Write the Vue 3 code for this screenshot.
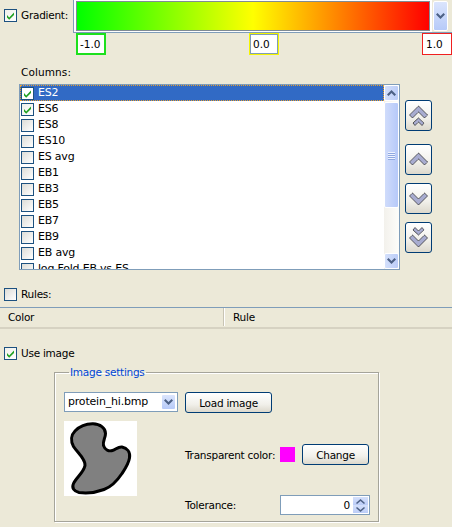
<script setup>
const columns = ['ES2','ES6','ES8','ES10','ES avg','EB1','EB3','EB5','EB7','EB9','EB avg','log Fold EB vs ES'].map((name,i)=>({name,checked:i<2}))
const chevrons = {
  top: ['M13.5 6L22.5 15L19.5 18L13.5 12L7.5 18L4.5 15Z','M13.5 18L19 23L17 25.5L13.5 22L10 25.5L8 23Z'],
  up: ['M13.5 9L22.5 18L19.5 21L13.5 15L7.5 21L4.5 18Z'],
  down: ['M13.5 22L22.5 13L19.5 10L13.5 16L7.5 10L4.5 13Z'],
  bottom: ['M13.5 25L22.5 16L19.5 13L13.5 19L7.5 13L4.5 16Z','M13.5 13L19 8L17 5.5L13.5 9L10 5.5L8 8Z'],
}
const moves = [
  {k:'top',cls:'mv-top'},{k:'up',cls:'mv-up'},{k:'down',cls:'mv-down'},{k:'bottom',cls:'mv-bottom'}
]
</script>

<template>
  <div class="page">
    <section class="grad-row">
      <span class="cb on cb-grad"><svg viewBox="0 0 11 11"><path d="M2 5l2.2 2.4L9 2.5v2.4L4.2 9.8 2 7.4z"/></svg></span>
      <span class="lbl grad-lbl">Gradient:</span>
      <div class="grad-combo">
        <div class="grad-bar"></div>
        <div class="combo-btn big"><svg viewBox="0 0 9 7" width="9" height="7"><path d="M0 1.5L1.5 0L4.5 3L7.5 0L9 1.5L4.5 6Z"/></svg></div>
      </div>
    </section>
    <section class="limits">
      <span class="lim green">-1.0</span>
      <span class="lim yellow">0.0</span>
      <span class="lim red">1.0</span>
    </section>

    <div class="lbl col-lbl">Columns:</div>

    <section class="col-row">
      <div class="list">
        <div class="rows">
          <div v-for="(c,i) in columns" :key="c.name" class="row" :class="{sel:i===0}">
            <span class="cb" :class="{on:c.checked}"><svg v-if="c.checked" viewBox="0 0 11 11"><path d="M2 5l2.2 2.4L9 2.5v2.4L4.2 9.8 2 7.4z"/></svg></span>
            <span class="row-text">{{ c.name }}</span>
          </div>
        </div>
        <div class="vscroll">
          <div class="sb-btn"><svg viewBox="0 0 9 7" width="9" height="7"><path d="M0 4.5L1.5 6L4.5 3L7.5 6L9 4.5L4.5 0Z"/></svg></div>
          <div class="thumb"><i></i><i></i><i></i><i></i></div>
          <div class="track"></div>
          <div class="sb-btn"><svg viewBox="0 0 9 7" width="9" height="7"><path d="M0 1.5L1.5 0L4.5 3L7.5 0L9 1.5L4.5 6Z"/></svg></div>
        </div>
      </div>
      <div class="moves">
        <button v-for="m in moves" :key="m.k" class="btn mv" :class="m.cls">
          <svg width="27" height="31" viewBox="0 0 27 31"><path v-for="d in chevrons[m.k]" :key="d" :d="d"/></svg>
        </button>
      </div>
    </section>

    <section class="check-row rules">
      <span class="cb"></span><span class="lbl">Rules:</span>
    </section>

    <section class="table-head">
      <div class="th th-color">Color</div>
      <div class="th th-rule">Rule</div>
    </section>

    <section class="check-row use">
      <span class="cb on"><svg viewBox="0 0 11 11"><path d="M2 5l2.2 2.4L9 2.5v2.4L4.2 9.8 2 7.4z"/></svg></span><span class="lbl">Use image</span>
    </section>

    <fieldset class="settings">
      <legend>Image settings</legend>
      <div class="set-grid">
        <div class="left">
          <div class="top-line">
            <div class="combo"><span>protein_hi.bmp</span><div class="combo-btn"><svg viewBox="0 0 9 7" width="9" height="7"><path d="M0 1.5L1.5 0L4.5 3L7.5 0L9 1.5L4.5 6Z"/></svg></div></div>
            <button class="btn load">Load image</button>
          </div>
          <div class="preview">
            <svg width="73" height="75" viewBox="0 0 73 75">
              <defs><filter id="soft" x="-10%" y="-10%" width="120%" height="120%"><feGaussianBlur stdDeviation="0.6"/></filter></defs>
              <path filter="url(#soft)" d="M29 2.8C36 3 41.5 7 41.5 12.5C41.5 17 38.5 20 39.5 24.5C41 29 45 30.5 48.5 29.5C52 28.5 54 25.5 58 26C63 27 66.5 31 65.5 37C64.5 43 61 48 58 52.5C53 60 47 66 40 68.5C32 71.5 22 72.5 15 71.5C10 70.5 7.5 67 9.5 62.5C12 57 20 51 21 44.5C22 38 13 31 9.5 25.5C6.5 20 7 14 11 10C16 5 23 2.7 29 2.8Z" fill="#808080" stroke="#000" stroke-width="3"/>
            </svg>
          </div>
        </div>
        <div class="right">
          <div class="field transparent">
            <span class="lbl">Transparent color:</span>
            <span class="swatch"></span>
            <button class="btn change">Change</button>
          </div>
          <div class="field tol">
            <span class="lbl">Tolerance:</span>
            <div class="spin"><span class="val">0</span>
              <div class="spin-btns">
                <div><svg viewBox="0 0 9 5" width="9" height="5"><path d="M0 4L1 5L4.5 2L8 5L9 4L4.5 0Z"/></svg></div>
                <div><svg viewBox="0 0 9 5" width="9" height="5"><path d="M0 1L1 0L4.5 3L8 0L9 1L4.5 5Z"/></svg></div>
              </div>
            </div>
          </div>
        </div>
      </div>
    </fieldset>
  </div>
</template>

<style>
html, body { margin: 0; background: #ece9d8; }
</style>

<style scoped>
.page {
  width: 452px; height: 527px; overflow: hidden; background: #ece9d8;
  font-family: "DejaVu Sans", sans-serif; font-size: 10.5px; letter-spacing: -0.25px; color: #000;
}
.lbl { line-height: 14px; white-space: nowrap; }
.cb {
  box-sizing: border-box; width: 13px; height: 13px; flex: none; display: block;
  border: 1px solid #1c5180; background: linear-gradient(135deg, #dcdcd7, #fff);
}
.cb.on { background: linear-gradient(135deg, #f0f0ea, #fff); }
.cb svg { display: block; width: 11px; height: 11px; fill: #21a121; }

.grad-row { display: flex; height: 33px; }
.cb-grad { margin: 9px 0 0 4px; }
.grad-lbl { margin: 8px 0 0 4px; width: 55px; }
.grad-combo {
  box-sizing: border-box; flex: 1; height: 33px; display: flex; gap: 3px;
  border: 1px solid #7f9db9; border-top: 0; border-right: 0; padding: 1px 2px 2px 2px;
  background: #fff;
}
.grad-bar {
  width: 352px; height: 28px; border: 1px solid #808b94; 
  background: linear-gradient(to right, #0f0, #ff0 50%, #f00);
}
.grad-combo { background: linear-gradient(#ece9d8, #ece9d8) right / 20px 100% no-repeat, #fff; }
.combo-btn {
  box-sizing: border-box; width: 15px; display: flex; align-items: center; justify-content: center;
  background: linear-gradient(#dbe5fd, #b7caf8); border: 1px solid #fff; border-radius: 2px;
}
.combo-btn.big { height: 30px; margin-right: 2px; }
.combo-btn svg, .sb-btn svg { fill: #4d6185; }

.limits { display: flex; justify-content: space-between; padding-left: 76px; }
.lim {
  box-sizing: border-box; width: 30px; height: 22px; background: #fff; border: 1px solid #7f9db9;
  line-height: 19px; padding-left: 3px; letter-spacing: 0;
}
.green { border: 2px solid #1de01d; line-height: 18px; padding-left: 2px; }
.yellow { border: 1px solid #f5f500; box-shadow: inset 0 0 0 1px #7f9db9; padding-left: 3px; line-height: 20px; }
.red { border: 1px solid #f02020; box-shadow: inset 0 0 0 1px #fff; padding-left: 3px; line-height: 20px; }

.col-lbl { margin: 10px 0 0 21px; letter-spacing: 0.1px; }

.col-row { display: flex; margin: 5px 0 0 19px; align-items: flex-start; }
.list {
  box-sizing: border-box; width: 381px; height: 186px; display: flex; overflow: hidden;
  border: 1px solid #7f9db9; background: #fff;
}
.rows { flex: 1; min-width: 0; overflow: hidden; }
.row { display: flex; align-items: center; height: 16px; padding-left: 1px; }
.row .cb { margin-right: 4px; }
.row-text { line-height: 16px; white-space: nowrap; font-size: 11px; letter-spacing: -0.2px; }
.row.sel { background: #316ac5; color: #fff; outline: 1px dotted #e8a030; outline-offset: -1px; }
.row.sel .cb { background: #fff; }

.vscroll { width: 15px; flex: none; display: flex; flex-direction: column; background: linear-gradient(to right, #f3f1ec, #fdfdfa); }
.sb-btn {
  box-sizing: border-box; height: 16px; flex: none; display: flex; align-items: center; justify-content: center;
  background: linear-gradient(to right, #d4e0fb, #bccdf8); border: 1px solid #fff; border-radius: 2px;
}
.thumb {
  box-sizing: border-box; height: 106px; margin-top: 1px; flex: none;
  background: linear-gradient(to right, #d0dcfb, #b6c9f9); border: 1px solid #fff; border-radius: 2px;
  display: flex; flex-direction: column; align-items: center; justify-content: center; gap: 1px;
}
.thumb i { display: block; width: 7px; height: 1px; background: #eef3fe; box-shadow: 0 1px 0 #8fa8e0; }
.track { flex: 1; }

.btn {
  box-sizing: border-box; border: 1px solid #003c74; border-radius: 3px; padding: 0; margin: 0;
  background: linear-gradient(#fff, #f1f0ea 60%, #dcd8cc);
  font: inherit; letter-spacing: inherit; color: #000; display: flex; align-items: center; justify-content: center;
}
.moves { display: flex; flex-direction: column; margin-left: 5px; padding-top: 16px; }
.mv { width: 27px; height: 31px; }
.mv svg { display: block; flex: none; margin: -1px; fill: #a8acd0; stroke: #222; stroke-width: 1; stroke-dasharray: 1 0.4; }
.mv-up { margin-top: 13px; }
.mv-down, .mv-bottom { margin-top: 8px; }

.check-row { display: flex; align-items: center; gap: 4px; padding-left: 4px; }
.rules { margin-top: 17px; }
.use { margin-top: 17px; }

.table-head {
  display: flex; margin-top: 6px; height: 21px; border-top: 1px solid #7f9db9;
  background: #ece9d8; box-shadow: inset 0 -3px 0 -1px #d6d2c2;
  box-sizing: content-box;
}
.th { line-height: 18px; padding-left: 8px; box-sizing: border-box; }
.th-color { width: 225px; border-right: 1px solid #fff; box-shadow: inset -1px 0 0 #c8c4b4; height: 18px; }
.th-rule { flex: 1; }

.settings {
  box-sizing: border-box; width: 325px; height: 157px; margin: 5px 0 0 54px; padding: 0 9px;
  border: 1px solid #a5a49a; box-shadow: 1px 1px 0 #fff, inset 1px 1px 0 #fff; min-inline-size: 0;
}
legend { color: #0046d5; padding: 0 1px; margin-left: 5px; line-height: 14px; }
.set-grid { display: flex; margin-top: 13px; }
.left { width: 208px; flex: none; }
.top-line { display: flex; gap: 7px; }
.combo {
  box-sizing: border-box; width: 114px; height: 20px; display: flex; justify-content: space-between; align-items: stretch;
  background: #fff; border: 1px solid #7f9db9; padding: 1px; line-height: 16px;
}
.combo span { padding-left: 2px; font-size: 11px; letter-spacing: -0.2px; }
.load { width: 87px; height: 21px; }
.preview { width: 73px; height: 75px; margin-top: 8px; background: #fff; }
.preview svg { display: block; }
.right { flex: 1; position: relative; width: 0; }
.field { white-space: nowrap; display: flex; align-items: center; margin-left: -87px; width: 190px; }
.field .lbl { width: 95px; flex: none; }
.transparent { margin-top: 52px; height: 21px; }
.swatch { width: 15px; height: 15px; background: #f0f; flex: none; }
.change { width: 67px; height: 21px; margin-left: 7px; flex: none; }
.tol { margin-top: 30px; height: 20px; }
.spin {
  box-sizing: border-box; width: 90px; height: 20px; display: flex; justify-content: flex-end;
  border: 1px solid #7f9db9; background: #fff; padding: 1px;
}
.val { line-height: 16px; margin-right: 3px; }
.spin-btns { width: 15px; display: flex; flex-direction: column; }
.spin-btns div { flex: 1; display: flex; align-items: center; justify-content: center; background: linear-gradient(#d4e0fb, #bccdf8); }
.spin-btns svg { fill: #4d6185; }
</style>
